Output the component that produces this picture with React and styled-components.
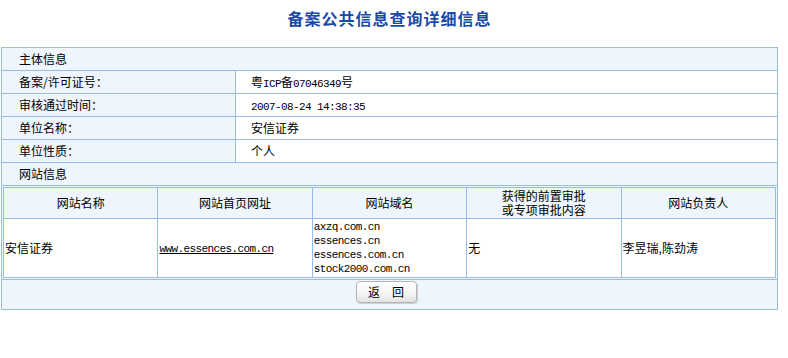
import React from "react";
import styled, { createGlobalStyle } from "styled-components";

const Global = createGlobalStyle`
  html, body { margin: 0; padding: 0; background: #fff; }
  body {
    font-family: "Noto Sans CJK SC", "Liberation Sans", sans-serif;
    font-size: 12px;
    color: #000;
  }
`;

const BORDER = "#99bbe8";
const LIGHT = "#eef5fd";

const Page = styled.div`
  width: 777px;
  padding-left: 1px;
`;

const Title = styled.h1`
  margin: 0;
  height: 47px;
  padding-top: 9px;
  box-sizing: border-box;
  text-align: center;
  font-size: 16px;
  line-height: 18px;
  font-weight: bold;
  letter-spacing: 1px;
  color: #1a4aa6;
`;

const OuterTable = styled.table`
  width: 777px;
  border-collapse: collapse;
  table-layout: fixed;
  border: 1px solid ${BORDER};
`;

const Cell = styled.td`
  border: 1px solid ${BORDER};
  padding: 0;
  background: ${(p) => (p.$light ? LIGHT : "#fff")};
  vertical-align: middle;
`;

const CellText = styled.div`
  height: 22px;
  line-height: 22px;
  overflow: hidden;
  white-space: nowrap;
  padding-left: ${(p) => p.$indent}px;
`;

const NestCell = styled.td`
  border: 1px solid ${BORDER};
  padding: 1px;
  background: ${LIGHT};
`;

const FooterCell = styled.td`
  border: 1px solid ${BORDER};
  padding: 0;
  background: ${LIGHT};
`;

const FooterBar = styled.div`
  height: 29px;
  padding-top: 1px;
  box-sizing: border-box;
  display: flex;
  justify-content: center;
  align-items: flex-start;
`;

const InnerTable = styled.table`
  width: 773px;
  border-collapse: collapse;
  table-layout: fixed;
  border: 1px solid ${BORDER};
`;

const HeadCell = styled.th`
  border: 1px solid ${BORDER};
  background: ${LIGHT};
  font-weight: normal;
  text-align: center;
  padding: 0;
  vertical-align: middle;
`;

const HeadText = styled.div`
  height: 30px;
  display: flex;
  flex-direction: column;
  justify-content: center;
  line-height: 14px;
`;

const DataCell = styled.td`
  border: 1px solid ${BORDER};
  background: #fff;
  padding: 0 0 0 1px;
  vertical-align: middle;
  text-align: left;
`;

const DataText = styled.div`
  height: 58px;
  display: flex;
  flex-direction: column;
  justify-content: center;
  line-height: 14px;
  white-space: nowrap;
  overflow: hidden;
`;

const Mono = styled.span`
  font-family: "Liberation Mono", monospace;
  font-size: 11px;
  letter-spacing: -0.6px;
  vertical-align: baseline;
  line-height: 1;
`;

const Link = styled.a`
  color: #000;
  text-decoration: underline;
  font-family: "Liberation Mono", monospace;
  font-size: 11px;
  letter-spacing: -0.6px;
`;

const DomainLine = styled.div`
  font-family: "Liberation Mono", monospace;
  font-size: 11px;
  letter-spacing: -0.6px;
  line-height: 14px;
  height: 14px;
`;

const Button = styled.button`
  width: 61px;
  height: 22px;
  margin: 0 7px 0 0;
  padding: 0;
  border: 1px solid #b4b4b4;
  border-radius: 4px;
  background: linear-gradient(#ffffff, #f4f4f4 60%, #e2e2e2);
  box-shadow: 1px 1px 0 #d0d0d0;
  font-family: "Noto Sans CJK SC", sans-serif;
  font-size: 12px;
  line-height: 20px;
  color: #000;
  cursor: pointer;
`;

const infoRows = [
  ["备案/许可证号：", <>粤<Mono>ICP</Mono>备<Mono>07046349</Mono>号</>],
  ["审核通过时间：", <Mono>2007-08-24 14:38:35</Mono>],
  ["单位名称：", "安信证券"],
  ["单位性质：", "个人"],
];

const headers = [
  "网站名称",
  "网站首页网址",
  "网站域名",
  <>获得的前置审批<br />或专项审批内容</>,
  "网站负责人",
];

const domains = ["axzq.com.cn", "essences.cn", "essences.com.cn", "stock2000.com.cn"];

export default function App() {
  return (
    <Page>
      <Global />
      <Title>备案公共信息查询详细信息</Title>
      <OuterTable>
        <colgroup>
          <col style={{ width: 234 }} />
          <col />
        </colgroup>
        <tbody>
          <tr>
            <Cell colSpan={2} $light><CellText $indent={17}>主体信息</CellText></Cell>
          </tr>
          {infoRows.map(([k, v]) => (
            <tr key={k}>
              <Cell $light><CellText $indent={17}>{k}</CellText></Cell>
              <Cell><CellText $indent={15}>{v}</CellText></Cell>
            </tr>
          ))}
          <tr>
            <Cell colSpan={2} $light><CellText $indent={17}>网站信息</CellText></Cell>
          </tr>
          <tr>
            <NestCell colSpan={2}>
              <InnerTable>
                <thead>
                  <tr>
                    {headers.map((h, i) => (
                      <HeadCell key={i}><HeadText>{h}</HeadText></HeadCell>
                    ))}
                  </tr>
                </thead>
                <tbody>
                  <tr>
                    <DataCell><DataText>安信证券</DataText></DataCell>
                    <DataCell>
                      <DataText><span><Link href="#">www.essences.com.cn</Link></span></DataText>
                    </DataCell>
                    <DataCell>
                      <DataText>
                        {domains.map((d) => (
                          <DomainLine key={d}>{d}</DomainLine>
                        ))}
                      </DataText>
                    </DataCell>
                    <DataCell><DataText>无</DataText></DataCell>
                    <DataCell><DataText>李昱瑞,陈劲涛</DataText></DataCell>
                  </tr>
                </tbody>
              </InnerTable>
            </NestCell>
          </tr>
          <tr>
            <FooterCell colSpan={2}>
              <FooterBar>
                <Button type="button">返　回</Button>
              </FooterBar>
            </FooterCell>
          </tr>
        </tbody>
      </OuterTable>
    </Page>
  );
}
